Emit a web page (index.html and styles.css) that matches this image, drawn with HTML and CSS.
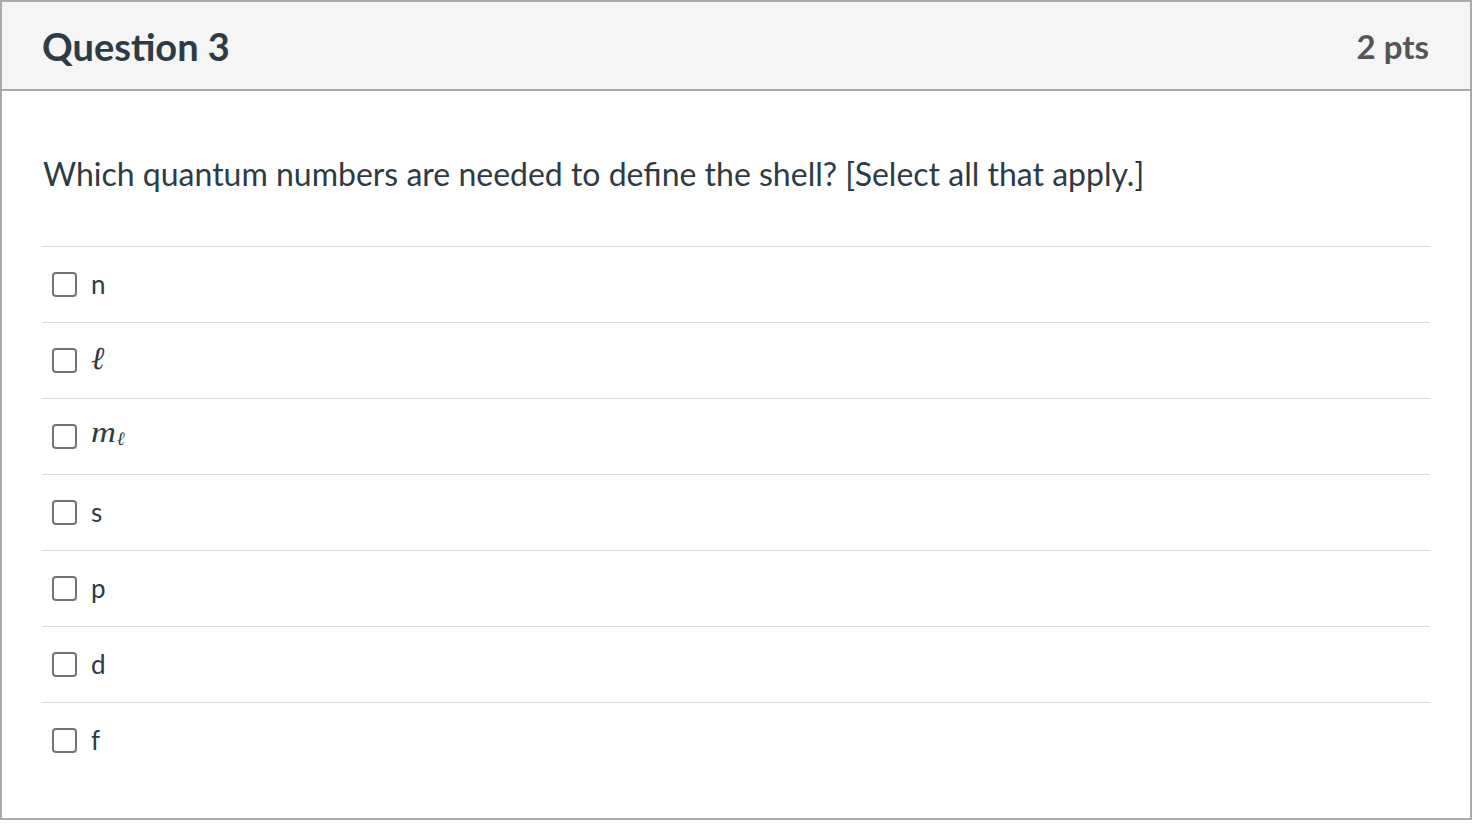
FILE: index.html
```html
<!DOCTYPE html>
<html>
<head>
<meta charset="utf-8">
<link rel="stylesheet" href="styles.css">
</head>
<body>
<div class="question">
  <div class="q-header">
    <h2 class="q-title">Question 3</h2>
    <span class="q-points">2 pts</span>
  </div>
  <div class="q-body">
    <p class="q-text">Which quantum numbers are needed to define the shell? [Select all that apply.]</p>
    <div class="answers">
      <label class="answer"><span class="box"></span><span class="label">n</span></label>
      <label class="answer"><span class="box"></span><span class="label math ell">ℓ</span></label>
      <label class="answer"><span class="box"></span><span class="label math"><span class="m">m</span><sub>ℓ</sub></span></label>
      <label class="answer"><span class="box"></span><span class="label">s</span></label>
      <label class="answer"><span class="box"></span><span class="label">p</span></label>
      <label class="answer"><span class="box"></span><span class="label">d</span></label>
      <label class="answer"><span class="box"></span><span class="label">f</span></label>
    </div>
  </div>
</div>
</body>
</html>
```

FILE: styles.css
```css
html, body {
  margin: 0;
  padding: 0;
  background: #fff;
}
body {
  font-family: Lato, "Noto Sans", sans-serif;
  color: #2d3b45;
}
.question {
  box-sizing: border-box;
  width: 1472px;
  height: 820px;
  border: 2px solid #aaaaaa;
  background: #fff;
}
.q-header {
  box-sizing: border-box;
  height: 89px;
  background: #f5f5f5;
  border-bottom: 2px solid #aaaaaa;
  display: flex;
  align-items: center;
  justify-content: space-between;
  padding: 0 41px 0 40px;
}
.q-title {
  margin: 0;
  font-size: 38px;
  font-weight: 700;
  color: #2d3b45;
}
.q-points {
  font-size: 33px;
  font-weight: 700;
  color: #555555;
}
.q-body {
  padding: 0 40px 0 40px;
}
.q-text {
  margin: 0;
  padding: 63px 0 52px 1px;
  font-size: 32px;
  line-height: 40px;
}
.answers {
  display: flex;
  flex-direction: column;
}
.answer {
  display: flex;
  align-items: center;
  height: 76px;
  box-sizing: border-box;
  border-top: 1px solid #dadada;
  padding-left: 10px;
}
.box {
  box-sizing: border-box;
  width: 25px;
  height: 25px;
  border: 2px solid #737373;
  border-radius: 4px;
  margin-right: 14px;
}
.label {
  font-size: 26px;
  line-height: 30px;
  padding-bottom: 2px;
}
.math {
  font-family: "Liberation Serif", "DejaVu Serif", serif;
  font-style: italic;
  color: #2d3b45;
}
.ell {
  font-size: 32px;
  padding-bottom: 6px;
}
.m {
  display: inline-block;
  font-size: 30px;
  transform: scaleX(1.15);
  transform-origin: left center;
  margin-right: 4px;
}
.math sub {
  font-size: 19px;
  vertical-align: -3px;
}
```
